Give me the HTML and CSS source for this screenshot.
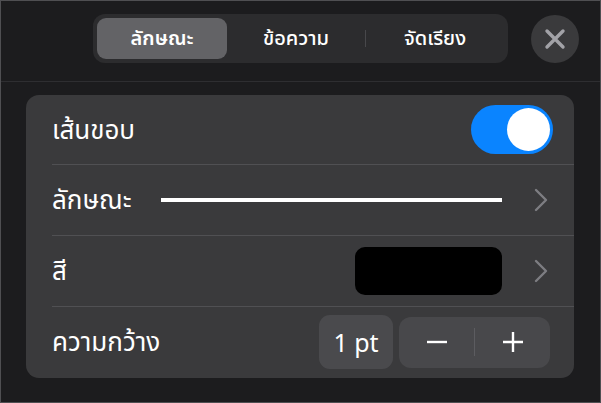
FILE: index.html
```html
<!DOCTYPE html>
<html lang="th">

<head>
    <meta charset="UTF-8">
    <meta name="viewport" content="width=device-width, initial-scale=1.0">
    <title>รูปแบบเส้นขอบ</title>
    <link rel="stylesheet" href="styles.css">
</head>

<body>
    <div class="screen">

        <!-- Barra superior con pestañas y botón cerrar -->
        <div class="top-bar">
            <div class="segments">
                <div class="segment active">ลักษณะ</div>
                <div class="segment">ข้อความ</div>
                <div class="segment-divider"></div>
                <div class="segment">จัดเรียง</div>
            </div>
            <button class="close-button" aria-label="ปิด">
                <svg width="22" height="22" viewBox="0 0 22 22">
                    <path d="M3 3 L19 19 M19 3 L3 19" stroke="#a2a2a7" stroke-width="3.4" stroke-linecap="round" fill="none"/>
                </svg>
            </button>
        </div>

        <!-- Tarjeta de opciones de borde -->
        <div class="card">
            <div class="row">
                <span class="label">เส้นขอบ</span>
                <div class="toggle"><div class="knob"></div></div>
            </div>

            <div class="row">
                <span class="label">ลักษณะ</span>
                <div class="line-preview"></div>
                <svg class="chevron" width="14" height="24" viewBox="0 0 14 24">
                    <path d="M2 2 L12 12 L2 22" stroke="#7d7d82" stroke-width="2.4" fill="none" stroke-linecap="round" stroke-linejoin="round"/>
                </svg>
            </div>

            <div class="row">
                <span class="label">สี</span>
                <div class="swatch"></div>
                <svg class="chevron" width="14" height="24" viewBox="0 0 14 24">
                    <path d="M2 2 L12 12 L2 22" stroke="#7d7d82" stroke-width="2.4" fill="none" stroke-linecap="round" stroke-linejoin="round"/>
                </svg>
            </div>

            <div class="row">
                <span class="label">ความกว้าง</span>
                <div class="value-box">1 pt</div>
                <div class="stepper">
                    <span class="step">
                        <svg width="24" height="24" viewBox="0 0 24 24"><path d="M2 12 H22" stroke="#fff" stroke-width="2.4"/></svg>
                    </span>
                    <span class="step-divider"></span>
                    <span class="step">
                        <svg width="24" height="24" viewBox="0 0 24 24"><path d="M2 12 H22 M12 2 V22" stroke="#fff" stroke-width="2.4"/></svg>
                    </span>
                </div>
            </div>
        </div>

    </div>
</body>

</html>
```

FILE: styles.css
```css
/* Estilos generales */
body {
    margin: 0;
    background-color: #1c1c1e;
    font-family: "Noto Sans", "Noto Sans Thai", sans-serif;
    color: #fff;
}

.screen {
    width: 601px;
    height: 403px;
    box-sizing: border-box;
    border: 1px solid #4f4f52;
    background-color: #1c1c1e;
    overflow: hidden;
}

/* Barra superior */
.top-bar {
    height: 81px;
    box-sizing: border-box;
    padding: 13px 0 0 92px;
    border-bottom: 1px solid #2e2e31;
    display: flex;
    align-items: flex-start;
}

.segments {
    width: 415px;
    height: 49px;
    box-sizing: border-box;
    padding: 4px;
    border-radius: 12px;
    background-color: #2c2c2e;
    display: flex;
    align-items: center;
}

.segment {
    flex: 1;
    height: 41px;
    display: flex;
    align-items: center;
    justify-content: center;
    font-size: 20px;
    font-weight: 500;
    border-radius: 9px;
}

.segment.active {
    flex: 0 0 130px;
    background-color: #636366;
    font-weight: 600;
}

.segment-divider {
    width: 1px;
    height: 17px;
    background-color: #48484b;
}

.close-button {
    margin: 1px 0 0 23px;
    width: 48px;
    height: 48px;
    border: none;
    border-radius: 50%;
    background-color: #3a3a3c;
    display: flex;
    align-items: center;
    justify-content: center;
    padding: 0;
}

/* Tarjeta */
.card {
    margin: 13px 0 0 25px;
    width: 548px;
    height: 283px;
    border-radius: 13px;
    background-color: #3a3a3c;
    overflow: hidden;
}

.row {
    height: 70px;
    margin-left: 26px;
    padding-right: 21px;
    display: flex;
    align-items: center;
    border-top: 1px solid #505053;
}

.row:first-child {
    height: 69px;
    border-top: none;
}

.label {
    font-size: 26px;
    flex: 1;
    padding-top: 2px;
}

/* Interruptor */
.toggle {
    width: 82px;
    height: 49px;
    box-sizing: border-box;
    padding: 3px;
    border-radius: 25px;
    background-color: #0a84ff;
    display: flex;
    justify-content: flex-end;
}

.knob {
    width: 43px;
    height: 43px;
    border-radius: 50%;
    background-color: #fff;
}

.line-preview {
    flex: 0 0 341px;
    height: 4px;
    background-color: #fff;
    margin-right: 32px;
}

.chevron {
    margin-right: 5px;
}

.swatch {
    width: 147px;
    height: 48px;
    border-radius: 10px;
    background-color: #000;
    margin-right: 32px;
}

/* Ancho */
.value-box {
    width: 74px;
    height: 54px;
    border-radius: 11px;
    background-color: #4a4a4d;
    display: flex;
    align-items: center;
    justify-content: center;
    font-size: 25px;
}

.stepper {
    margin-left: 6px;
    margin-right: 3px;
    width: 151px;
    height: 51px;
    border-radius: 12px;
    background-color: #48484b;
    display: flex;
    align-items: center;
}

.step {
    flex: 1;
    display: flex;
    justify-content: center;
    align-items: center;
}

.step-divider {
    width: 1px;
    height: 28px;
    background-color: #5c5c60;
}
```
